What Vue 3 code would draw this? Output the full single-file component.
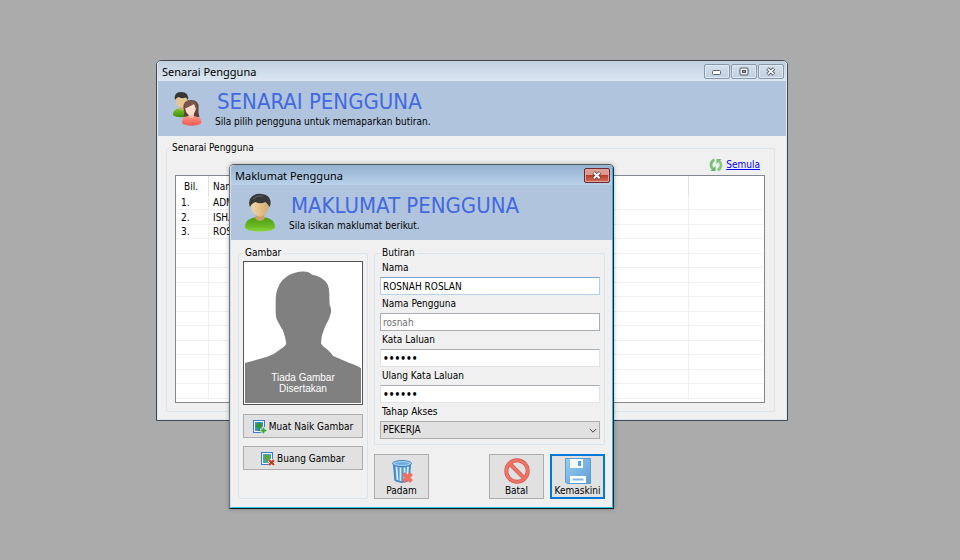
<script setup>
import { ref } from 'vue'

const users = ['ADMIN', 'ISHAK', 'ROSNAH ROSLAN']
const rowCount = 14

const nama = ref('ROSNAH ROSLAN')
const namaPengguna = ref('rosnah')
const kataLaluan = ref('rosnah')
const ulangKataLaluan = ref('rosnah')
const tahap = ref('PEKERJA')
</script>

<template>
  <main class="desktop">
    <section class="window list-window" aria-label="Senarai Pengguna">
      <div class="frame">
        <header class="titlebar">
          <span class="title">Senarai Pengguna</span>
          <button class="cap" type="button" aria-label="Minimize">
            <svg width="12" height="9" viewBox="0 0 12 9"><rect x="1.5" y="3.5" width="8" height="4" rx="1" fill="#fff" stroke="#5b6470" /></svg>
          </button>
          <button class="cap" type="button" aria-label="Maximize">
            <svg width="12" height="9" viewBox="0 0 12 9"><rect x="2" y="1" width="8" height="7" rx="1" fill="#f4f4f4" stroke="#4c5663" /><rect x="4.5" y="3.5" width="3" height="2" fill="#8b97a5" stroke="#4c5663" /></svg>
          </button>
          <button class="cap" type="button" aria-label="Close">
            <svg width="12" height="9" viewBox="0 0 12 9"><path d="M2.5 1.5 9 7.5M9 1.5 2.5 7.5" stroke="#55606d" stroke-width="3.6" /><path d="M2.8 1.8 8.7 7.2M8.7 1.8 2.8 7.2" stroke="#f5f5f5" stroke-width="1.6" /></svg>
          </button>
        </header>

        <div class="banner">
          <svg class="banner-icon" width="34" height="36" viewBox="0 0 34 36">
            <defs>
              <linearGradient id="g1" x1="0" y1="0" x2="0" y2="1"><stop offset="0" stop-color="#7cc524" /><stop offset="1" stop-color="#3c8d10" /></linearGradient>
              <linearGradient id="r1" x1="0" y1="0" x2="0" y2="1"><stop offset="0" stop-color="#ff9384" /><stop offset="1" stop-color="#ee5a50" /></linearGradient>
            </defs>
            <path d="M3 24C3 19 6 17.500 12 17.500S21 19 21 24C19 27 5 27 3 24Z" fill="url(#g1)" />
            <path d="M9 13H14V18.500Q11.500 20 9 18.500Z" fill="#cda96f" />
            <path d="M6 8Q6 3 11.500 3T17 8Q17 16 11.500 17Q6 16 6 8Z" fill="#e6c793" />
            <path d="M5 9Q3.500 1 11 1Q19 1 18 9L16 6.500Q11 8 8.500 6Q6 7 5 9Z" fill="#363636" />
            <path d="M13.500 25Q15 22 13.500 17Q13 9 21 9Q29 9 28.500 17Q28 22 29.500 26Q24 28 13.500 25Z" fill="#5f4038" />
            <path d="M12 32C12 26 15 25 21.500 25S31.500 27 31.500 32C28 35.500 15 35.500 12 32Z" fill="url(#r1)" />
            <path d="M18.500 21H24V26Q21.500 28 18.500 26Z" fill="#ecc4b2" />
            <path d="M15 17Q15 11 20.500 11T26 17Q25 24 20.500 24T15 17Z" fill="#fbdccd" />
            <path d="M14 18Q13.500 9.500 21 9.500Q28 9.500 27.500 20Q25.500 18 24 13Q19 16 14 18Z" fill="#7a564a" />
          </svg>
          <div class="banner-text">
            <h1>SENARAI PENGGUNA</h1>
            <p>Sila pilih pengguna untuk memaparkan butiran.</p>
          </div>
        </div>

        <div class="list-body">
          <fieldset class="group list-group">
            <legend>Senarai Pengguna</legend>
            <div class="reload">
              <svg width="14" height="14" viewBox="0 0 14 14">
                <path d="M5.500 1.800Q2 3 2 7Q2 9.500 4 11" fill="none" stroke="#76c277" stroke-width="2.800" />
                <path d="M1.500 13H6.500V8Z" fill="#5fb661" />
                <path d="M8.500 12.200Q12 11 12 7Q12 4.500 10 3" fill="none" stroke="#83cb82" stroke-width="2.800" />
                <path d="M12.500 1H7.500V6Z" fill="#70c070" />
              </svg>
              <a href="#">Semula</a>
            </div>
            <div class="list">
              <table>
                <colgroup><col class="c-no" /><col /><col class="c-last" /></colgroup>
                <thead>
                  <tr><th scope="col">Bil.</th><th scope="col">Nama</th><th></th></tr>
                </thead>
                <tbody>
                  <tr v-for="n in rowCount" :key="n">
                    <td>{{ users[n - 1] ? n + '.' : '' }}</td>
                    <td>{{ users[n - 1] }}</td>
                    <td></td>
                  </tr>
                </tbody>
              </table>
            </div>
          </fieldset>
        </div>
      </div>
    </section>

    <section class="window dialog" role="dialog" aria-label="Maklumat Pengguna">
      <form class="frame" @submit.prevent>
        <header class="titlebar">
          <span class="title">Maklumat Pengguna</span>
          <button class="cap close" type="button" aria-label="Close">
            <svg width="12" height="9" viewBox="0 0 12 9"><path d="M2.500 1.500 9 7.500M9 1.500 2.500 7.500" stroke="#5c3a3a" stroke-width="3.600" /><path d="M2.800 1.800 8.700 7.200M8.700 1.800 2.800 7.200" stroke="#fff" stroke-width="2" /></svg>
          </button>
        </header>

        <div class="banner">
          <svg class="banner-icon" width="34" height="40" viewBox="0 0 34 40">
            <defs>
              <linearGradient id="g2" x1="0" y1="0" x2="0" y2="1"><stop offset="0" stop-color="#4c9e14" /><stop offset=".6" stop-color="#68b822" /><stop offset="1" stop-color="#8bd63c" /></linearGradient>
              <linearGradient id="s2" x1="0" y1="0" x2="1" y2="0"><stop offset="0" stop-color="#f1d6a6" /><stop offset="1" stop-color="#d3ac70" /></linearGradient>
            </defs>
            <path d="M1 34C1 27 7 25 11 24.500H21C26 25 31 28 31 34C31 40 1 40 1 34Z" fill="url(#g2)" />
            <path d="M11.500 20H20.500V26Q16 30 11.500 26Z" fill="#c9a368" />
            <path d="M7 11Q7 5 16 5T25 11Q25 17 21.500 21Q16 26 10.500 21Q7 17 7 11Z" fill="url(#s2)" />
            <path d="M6 14Q3.500 7 8 3.500Q12 0 18 1Q25.500 2 26.500 8Q27 11 25.500 14Q24 11 21.500 9Q16 11.500 11.500 9Q8 10 6 14Z" fill="#383838" />
            <path d="M9 6Q13 2 19 3" fill="none" stroke="#666" stroke-width="1" />
          </svg>
          <div class="banner-text">
            <h1>MAKLUMAT PENGGUNA</h1>
            <p>Sila isikan maklumat berikut.</p>
          </div>
        </div>

        <div class="dialog-body">
          <fieldset class="group photo-group">
            <legend>Gambar</legend>
            <figure class="photo">
              <svg viewBox="282 68 355 424" preserveAspectRatio="none" aria-hidden="true">
                <path d="M282 371L350 352Q372 345 390 329Q408 319 408 312Q407 295 397 270Q383 248 378 235Q375 222 376 190C376 165 378 155 383 143C394 113 425 96 455 94Q477 92 486 103Q522 110 535 133Q541 147 540 170L541 195Q547 205 545 218Q541 232 538 240Q527 258 523 272Q514 292 515 312Q518 320 530 327Q546 340 552 350L600 370Q628 379 637 387V492H282Z" fill="#808080" />
              </svg>
              <figcaption>Tiada Gambar<br />Disertakan</figcaption>
            </figure>
            <button class="btn wide" type="button">
              <svg width="14" height="14" viewBox="0 0 14 14">
                <rect x=".5" y=".5" width="11" height="12" fill="#fff" stroke="#3c78c8" />
                <rect x="2" y="2" width="8" height="9" fill="#3b8be0" />
                <path d="M6 2Q9 3 8.500 6Q8.500 8 6.800 8V11H5.200V8Q3 8 3.200 5.500Q3.500 3 6 2Z" fill="#2f9a1c" />
                <path d="M10.500 7V14M7 10.500H14" stroke="#fff" stroke-width="3.400" />
                <path d="M10.500 7.500V13.500M7.500 10.500H13.500" stroke="#35a33a" stroke-width="2" />
              </svg>
              <span>Muat Naik Gambar</span>
            </button>
            <button class="btn wide" type="button">
              <svg width="14" height="14" viewBox="0 0 14 14">
                <rect x=".5" y=".5" width="11" height="12" fill="#fff" stroke="#3c78c8" />
                <rect x="2" y="2" width="8" height="9" fill="#4d9be8" />
                <path d="M6 2Q9 3 8.500 6Q8.500 8 6.800 8V11H5.200V8Q3 8 3.200 5.500Q3.500 3 6 2Z" fill="#58ad24" />
                <path d="M8 8 13 13M13 8 8 13" stroke="#fff" stroke-width="3.400" />
                <path d="M8 8 13 13M13 8 8 13" stroke="#c93a1e" stroke-width="2.200" />
              </svg>
              <span>Buang Gambar</span>
            </button>
          </fieldset>

          <div class="right">
            <fieldset class="group fields">
              <legend>Butiran</legend>
              <label for="nama">Nama</label>
              <input id="nama" v-model="nama" class="active" type="text" />
              <label for="pengguna">Nama Pengguna</label>
              <input id="pengguna" v-model="namaPengguna" class="locked" type="text" readonly />
              <label for="kata">Kata Laluan</label>
              <input id="kata" v-model="kataLaluan" class="secret" type="password" />
              <label for="ulang">Ulang Kata Laluan</label>
              <input id="ulang" v-model="ulangKataLaluan" class="secret" type="password" />
              <label for="tahap">Tahap Akses</label>
              <div class="combo">
                <select id="tahap" v-model="tahap">
                  <option>PEKERJA</option>
                </select>
                <svg width="8" height="6" viewBox="0 0 8 6" aria-hidden="true"><path d="M.8 1 4 4.200 7.200 1" fill="none" stroke="#444" /></svg>
              </div>
            </fieldset>

            <div class="actions">
              <button class="btn tall" type="button">
                <svg width="26" height="26" viewBox="0 0 26 26">
                  <path d="M4.500 6H21.500L20 22.500Q13 26 6 22.500Z" fill="#4f97d4" stroke="#3579b8" />
                  <path d="M7.500 8.500 8.500 22M11.500 9.500V23M15.500 9.500V23M19 8.500 18 21" stroke="#d6ecfb" stroke-width="1.800" />
                  <ellipse cx="13" cy="5.500" rx="9.500" ry="3" fill="#a9d0f0" stroke="#3e82c0" />
                  <ellipse cx="13" cy="5.500" rx="7" ry="1.500" fill="#6faadd" />
                  <path d="M14.500 15.500 22.500 23.500M22.500 15.500 14.500 23.500" stroke="#f0705e" stroke-width="4" />
                </svg>
                <span>Padam</span>
              </button>
              <button class="btn tall" type="button">
                <svg width="26" height="26" viewBox="0 0 26 26">
                  <circle cx="13" cy="13" r="10.700" fill="none" stroke="#d9574c" stroke-width="4" />
                  <path d="M5.500 5.500 20.500 20.500" stroke="#d9574c" stroke-width="4" />
                  <circle cx="13" cy="13" r="10.700" fill="none" stroke="#ee7467" stroke-width="2.600" />
                  <path d="M5.500 5.500 20.500 20.500" stroke="#ee7467" stroke-width="2.600" />
                </svg>
                <span>Batal</span>
              </button>
              <button class="btn tall primary" type="submit">
                <svg width="26" height="26" viewBox="0 0 26 26">
                  <defs><linearGradient id="f1" x1="0" y1="0" x2="1" y2="1"><stop offset="0" stop-color="#9accee" /><stop offset="1" stop-color="#5c9fd6" /></linearGradient></defs>
                  <path d="M.5 .5H25.500V25.500H2L.5 24Z" fill="url(#f1)" stroke="#5a9bd2" />
                  <rect x="5" y="1" width="13" height="9" fill="#f4faff" />
                  <rect x="13" y="3" width="3" height="5" fill="#5b9fd8" />
                  <rect x="5" y="18" width="16" height="7" fill="#fff" />
                  <path d="M7.500 20.500H18.500V22.500H7.500Z" fill="#7fb6e2" />
                </svg>
                <span>Kemaskini</span>
              </button>
            </div>
          </div>
        </div>
      </form>
    </section>
  </main>
</template>

<style>
body {
  margin: 0;
}
</style>

<style scoped>
.desktop {
  position: relative;
  min-height: 100vh;
  overflow: hidden;
  background: #ababab;
  color: #000;
  font-family: "DejaVu Sans Condensed", "DejaVu Sans", sans-serif;
  font-size: 10px;
  line-height: 14px;
}

.desktop * {
  box-sizing: border-box;
}

.window {
  position: absolute;
  border: 1px solid #43484e;
  border-radius: 5px 5px 0 0;
  background: #f0f0f0;
}

.list-window {
  top: 60px;
  left: 156px;
  right: 172px;
}

.dialog {
  top: 164px;
  left: 229px;
  width: 385px;
  border-color: #555b62 #1c2a33 #141a1f #6f767d;
  box-shadow: 0 0 4px rgba(0, 0, 0, 0.3);
}

.frame {
  border: solid #dce8f3;
  border-width: 0 1px 1px;
  border-radius: 4px 4px 0 0;
}

.dialog .frame {
  border-color: #d0e0ee #27b8e2 #27c4e6 #d0e0ee;
}

.titlebar {
  display: flex;
  gap: 1px;
  height: 20px;
  padding: 3px 2px 2px 4px;
  border-radius: 4px 4px 0 0;
  background: linear-gradient(#c0cfde, #dbe7f3);
}

.dialog .titlebar {
  background: linear-gradient(#94b1d0, #b9d2ea);
}

.title {
  flex: 1;
  font-family: "Noto Sans", "Open Sans", sans-serif;
  font-size: 11px;
  line-height: 16px;
}

.cap {
  display: flex;
  align-items: center;
  justify-content: center;
  width: 26px;
  height: 15px;
  padding: 0;
  border: 1px solid #8796a8;
  border-radius: 2px;
  background: linear-gradient(#d3dfeb, #c0cfdf);
  box-shadow: inset 0 0 0 1px #dfe9f3;
}

.cap.close {
  border-color: #6d2830;
  background: linear-gradient(#dc9a91 45%, #bd3b2b 50%, #d0705f);
  box-shadow: inset 0 0 0 1px #e0a49b;
}

.banner {
  display: flex;
  align-items: center;
  gap: 11px;
  height: 55px;
  padding: 0 12px;
  background: #b0c4de;
}

.dialog .banner {
  padding: 1px 13px 0;
}

.banner h1 {
  margin: 0;
  padding-left: 2px;
  color: #4169e1;
  font-size: 22px;
  font-weight: 400;
  line-height: 26px;
}

.banner p {
  margin: 0;
}

.group {
  min-width: 0;
  margin: 0;
  border: 1px solid #d9e3ea;
  border-radius: 2px;
}

.group legend {
  height: 14px;
  padding: 0 2px;
}

.dialog .group legend {
  height: 12px;
  line-height: 12px;
}

.list-body {
  padding: 5px 11px 7px 8px;
}

.list-group {
  padding: 0 9px 8px 8px;
}

.list-group legend {
  margin-left: -5px;
}

.reload {
  display: flex;
  align-items: center;
  justify-content: flex-end;
  gap: 3px;
  height: 20px;
  padding-right: 5px;
}

.reload a {
  color: #0000ff;
}

.list {
  height: 228px;
  border: 1px solid #828790;
  background: #fff;
}

.list table {
  width: 100%;
  border-spacing: 0;
  table-layout: fixed;
}

.c-no {
  width: 33px;
}

.c-last {
  width: 75px;
}

.list th,
.list td {
  height: 14px;
  padding: 1px 4px 0;
  overflow: hidden;
  border-right: 1px solid #f0f0f0;
  font-weight: 400;
  line-height: 12px;
  text-align: left;
  white-space: nowrap;
}

.list th {
  height: 20px;
  padding-top: 2px;
  border-right-color: #e0e0e0;
}

.list th:first-child {
  padding-left: 8px;
}

.list td:first-child {
  padding-left: 5px;
}

.list td {
  border-bottom: 1px solid #f0f0f0;
}

.list tr:nth-child(even) td {
  height: 15px;
}

.list th:last-child,
.list td:last-child {
  border-right: 0;
}

.dialog-body {
  display: flex;
  gap: 6px;
  padding: 7px 7px 8px;
}

.photo-group {
  flex: 0 0 130px;
  padding: 0 4px;
}

.fields {
  padding: 0 4px 5px 5px;
}

.photo {
  display: grid;
  height: 144px;
  margin: 2px 0 9px;
  padding: 1px;
  border: 1px solid #555;
  background: #fff;
}

.photo svg {
  grid-area: 1 / 1;
  width: 100%;
  height: 140px;
}

.photo figcaption {
  grid-area: 1 / 1;
  align-self: end;
  padding-bottom: 9px;
  color: #fff;
  font-family: "Liberation Sans", Arial, sans-serif;
  font-size: 10px;
  line-height: 11px;
  text-align: center;
}

.btn {
  display: flex;
  align-items: center;
  justify-content: center;
  padding: 0;
  border: 1px solid #adadad;
  background: #e1e1e1;
  color: #000;
  font: inherit;
}

.btn.wide {
  gap: 2px;
  width: 100%;
  height: 24px;
  margin-bottom: 8px;
  padding-top: 2px;
}

.right {
  flex: 1;
  min-width: 0;
}

.fields label {
  display: block;
  height: 18px;
  padding: 0 2px;
  line-height: 18px;
}

.fields input,
.fields select {
  display: block;
  width: 100%;
  height: 18px;
  margin: 0;
  padding: 0 2px;
  border: 1px solid #e3e3e3;
  border-top-color: #abadb3;
  border-radius: 0;
  outline: 0;
  background: #fff;
  color: #000;
  font: inherit;
}

.fields input.active {
  border-color: #b5cfe7;
  border-top-color: #7da7d0;
}

.fields input.locked {
  border-color: #abadb3;
  color: #6d6d6d;
}

.fields input.secret {
  font-weight: 700;
}

.fields select {
  border-color: #adadad;
  background: #e1e1e1;
  appearance: none;
}

.combo {
  position: relative;
}

.combo svg {
  position: absolute;
  top: 7px;
  right: 3px;
  pointer-events: none;
}

.actions {
  display: flex;
  gap: 6px;
  margin-top: 9px;
}

.btn.tall {
  flex-direction: column;
  justify-content: flex-end;
  width: 55px;
  height: 45px;
  padding-bottom: 1px;
}

.btn.tall span {
  line-height: 13px;
}

.btn.tall:first-child {
  margin-right: auto;
}

.btn.primary {
  border: 2px solid #0078d7;
  padding-bottom: 0;
}
</style>
